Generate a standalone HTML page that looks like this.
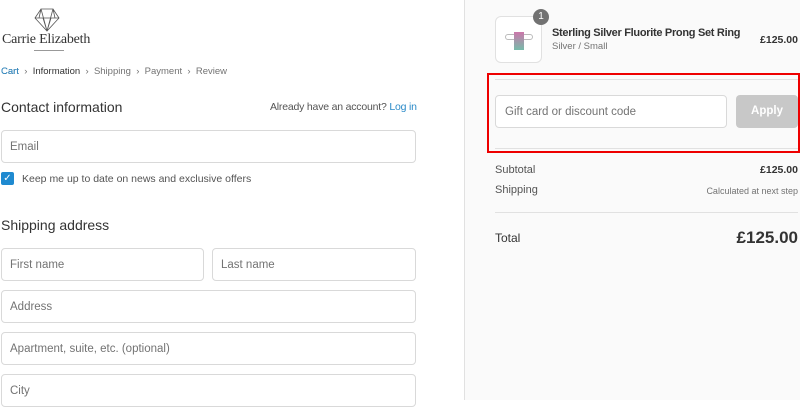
<!DOCTYPE html>
<html><head><style>
*{box-sizing:border-box;margin:0;padding:0}
body{width:800px;height:400px;overflow:hidden;background:#fff;font-family:"Liberation Sans",sans-serif;position:relative;color:#333}
.a{position:absolute;white-space:nowrap}
.f{position:absolute;border:1px solid #d9d9d9;border-radius:4px;background:#fff;font-size:11.5px;color:#737373;padding-left:8px;display:flex;align-items:center}
.r{background:#fafafa;left:464px;top:0;width:336px;height:400px;border-left:1px solid #e1e1e1}
</style></head><body>
<svg class="a" style="left:34px;top:8px" width="26" height="24" viewBox="0 0 26 24" fill="none" stroke="#555" stroke-width="0.8"><path d="M7 1h12l6 9-12 13L1 10z M1 10h24 M7 1l6 22 M19 1l-6 22 M7 1l-2 9 M19 1l2 9 M9 10l4 13 M17 10l-4 13"/></svg>
<div class="a" style="left:2px;top:32px;font-family:'Liberation Serif',serif;font-size:14px;color:#333;letter-spacing:-0.2px">Carrie Elizabeth</div>
<div class="a" style="left:34px;top:50px;width:30px;border-top:1px solid #999"></div>
<div class="a" style="left:1px;top:66px;font-size:9.5px;color:#737373">Cart &nbsp;<span>›</span>&nbsp; <span style="color:#333">Information</span> &nbsp;›&nbsp; Shipping &nbsp;›&nbsp; Payment &nbsp;›&nbsp; Review</div>
<div class="a" style="left:1px;top:66px;font-size:9.5px;color:#2a8ac8">Cart</div>
<div class="a" style="left:1px;top:99px;font-size:14px;color:#333">Contact information</div>
<div class="a" style="left:270px;top:101px;font-size:10.5px;color:#545454;letter-spacing:-0.2px">Already have an account? <span style="color:#2a8ac8">Log in</span></div>
<div class="f" style="left:1px;top:130px;width:415px;height:33px">Email</div>
<div class="a" style="left:1px;top:172px;width:13px;height:13px;background:#1f8ad0;border-radius:2px;color:#fff;font-size:10px;text-align:center;line-height:13px">✓</div>
<div class="a" style="left:22px;top:173px;font-size:10.5px;color:#545454">Keep me up to date on news and exclusive offers</div>
<div class="a" style="left:1px;top:217px;font-size:14px;color:#333">Shipping address</div>
<div class="f" style="left:1px;top:248px;width:203px;height:33px">First name</div>
<div class="f" style="left:212px;top:248px;width:204px;height:33px">Last name</div>
<div class="f" style="left:1px;top:290px;width:415px;height:33px">Address</div>
<div class="f" style="left:1px;top:332px;width:415px;height:33px">Apartment, suite, etc. (optional)</div>
<div class="f" style="left:1px;top:374px;width:415px;height:33px">City</div>
<div class="a r"></div>
<div class="a" style="left:495px;top:16px;width:47px;height:47px;border:1px solid #e1e1e1;border-radius:6px;background:#fff"></div>
<div class="a" style="left:505px;top:34px;width:28px;height:6px;border:1px solid #bbb;border-radius:3px"></div>
<div class="a" style="left:514px;top:32px;width:10px;height:18px;background:linear-gradient(#c7a,#7ba)"></div>
<div class="a" style="left:533px;top:9px;width:16px;height:16px;border-radius:8px;background:#727272;color:#fff;font-size:10px;text-align:center;line-height:16px">1</div>
<div class="a" style="left:552px;top:27px;font-size:11px;font-weight:bold;color:#333;letter-spacing:-0.3px">Sterling Silver Fluorite Prong Set Ring</div>
<div class="a" style="left:552px;top:41px;font-size:9.5px;color:#737373">Silver / Small</div>
<div class="a" style="right:2px;top:34px;font-size:10.5px;color:#333;font-weight:bold">£125.00</div>
<div class="a" style="left:495px;top:79px;width:303px;border-top:1px solid #e1e1e1"></div>
<div class="f" style="left:495px;top:95px;width:232px;height:33px;padding-left:9px">Gift card or discount code</div>
<div class="a" style="left:736px;top:95px;width:62px;height:33px;background:#c8c8c8;border-radius:4px;color:#fff;font-size:11.5px;font-weight:bold;text-align:center;line-height:33px">Apply</div>
<div class="a" style="left:495px;top:148px;width:303px;border-top:1px solid #e1e1e1"></div>
<div class="a" style="left:487px;top:73px;width:313px;height:80px;border:2px solid #e00"></div>
<div class="a" style="left:495px;top:164px;font-size:11px;color:#545454">Subtotal</div>
<div class="a" style="right:2px;top:164px;font-size:10.5px;color:#333;font-weight:bold">£125.00</div>
<div class="a" style="left:495px;top:184px;font-size:11px;color:#545454">Shipping</div>
<div class="a" style="right:2px;top:186px;font-size:9px;color:#737373">Calculated at next step</div>
<div class="a" style="left:495px;top:212px;width:303px;border-top:1px solid #e1e1e1"></div>
<div class="a" style="left:495px;top:231px;font-size:12px;color:#333">Total</div>
<div class="a" style="right:2px;top:228px;font-size:17px;color:#333;font-weight:bold">£125.00</div>
</body></html>
